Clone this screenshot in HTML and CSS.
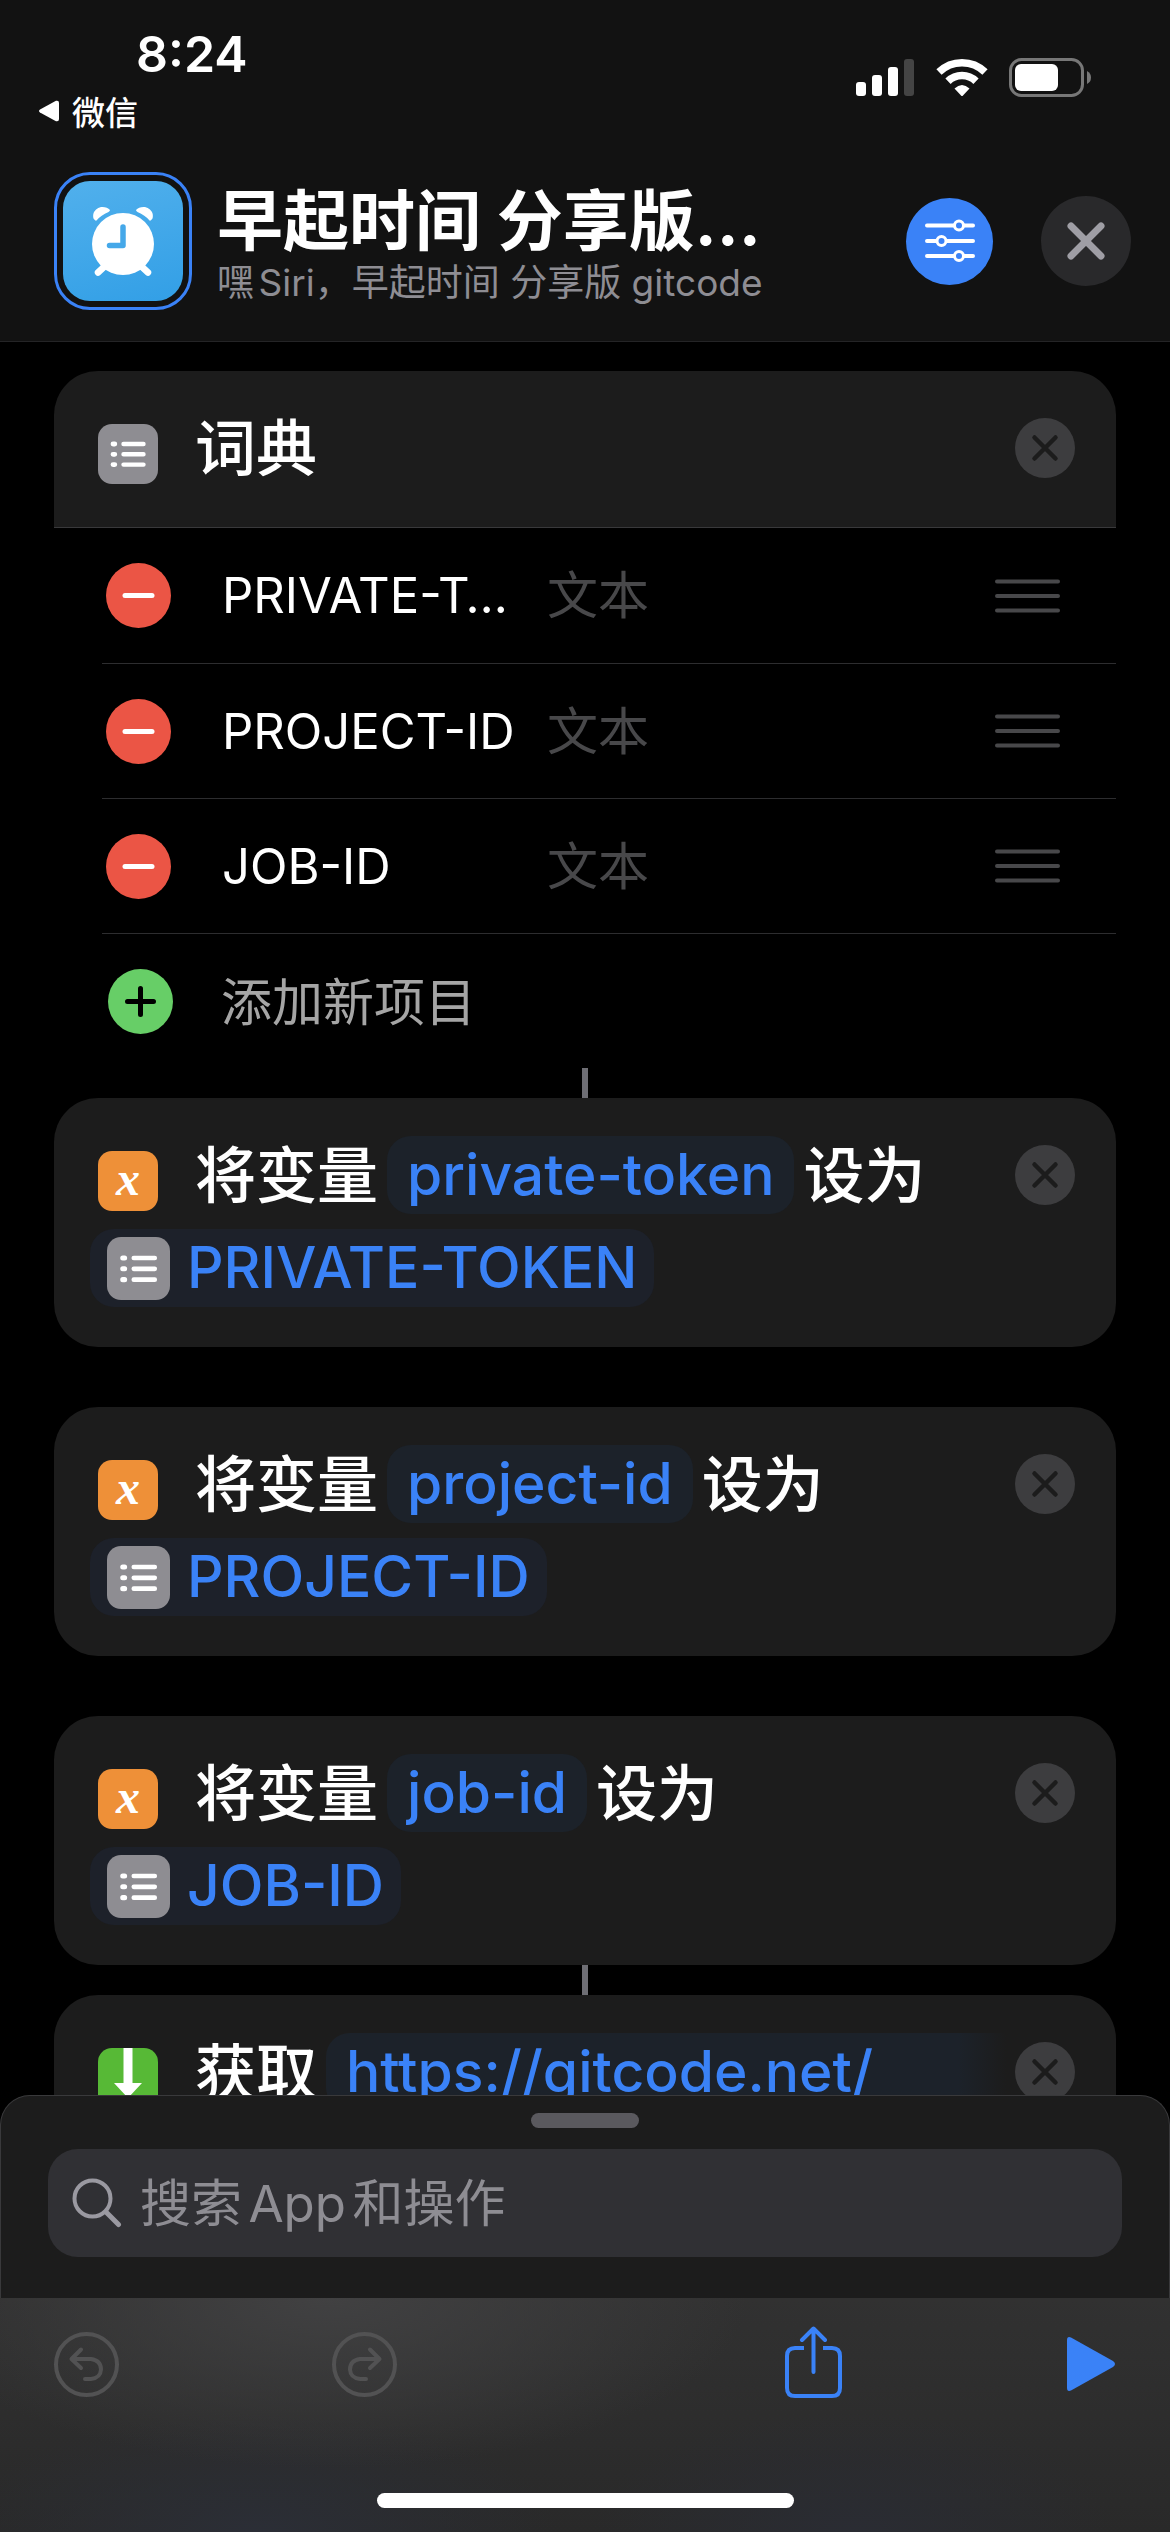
FILE: index.html
```html
<!DOCTYPE html>
<html lang="zh-CN">
<head>
<meta charset="utf-8">
<meta name="viewport" content="width=device-width, initial-scale=1">
<title>早起时间 分享版</title>
<link rel="stylesheet" href="styles.css">
</head>
<body>
<svg class="defs" aria-hidden="true">
  <symbol id="i-list" viewBox="0 0 60 60">
    <g fill="none" stroke="#fff" stroke-width="4.400" stroke-linecap="round">
      <path d="M25.500 20H45.500M25.500 30.300H45.500M25.500 40.600H45.500"/>
      <path stroke-width="4.800" d="M15 20h1.800M15 30.300h1.800M15 40.600h1.800"/>
    </g>
  </symbol>
  <symbol id="i-clear" viewBox="0 0 60 60">
    <circle cx="30" cy="30" r="30" fill="#3d3d3f"/>
    <path d="M19.500 19.500L40.500 40.500M40.500 19.500L19.500 40.500" fill="none" stroke="#1c1c1c" stroke-width="4.500" stroke-linecap="round"/>
  </symbol>
  <symbol id="i-minus" viewBox="0 0 65 65">
    <circle cx="32.500" cy="32.500" r="32.500" fill="#eb5545"/>
    <path d="M19 32.500H46" stroke="#fff" stroke-width="5" stroke-linecap="round"/>
  </symbol>
  <symbol id="i-grip" viewBox="0 0 65 34">
    <path d="M2 2.500H63M2 17H63M2 31.500H63" stroke="#48484a" stroke-width="4" stroke-linecap="round"/>
  </symbol>
</svg>

<div class="app">
  <header class="top">
    <div class="status">
      <div class="status-left">
        <time class="clock">8:24</time>
        <a class="back" href="#">
          <svg width="21" height="22" viewBox="0 0 21 22" aria-hidden="true"><path d="M2 9.500L18 .8Q21 0 21 3V19Q21 22 18 21.200L2 12.500Q0 11 2 9.500Z" fill="#fff"/></svg>
          <span>微信</span>
        </a>
      </div>
      <svg class="status-icons" width="236" height="40" viewBox="0 0 236 40" role="img" aria-label="信号、无线网络、电池">
        <g fill="#fff">
          <rect x="0" y="24" width="10" height="14" rx="3"/>
          <rect x="16" y="17" width="10" height="21" rx="3"/>
          <rect x="32" y="9" width="10" height="29" rx="3"/>
          <rect x="48" y="1" width="10" height="37" rx="3" fill="#444"/>
        </g>
        <g fill="none" stroke="#fff" stroke-width="7.500">
          <path d="M83 14A33 33 0 0 1 129 14"/>
          <path d="M92 23.200A20 20 0 0 1 120 23.200"/>
        </g>
        <path d="M98.500 30.500Q106 23.500 113.500 30.500L107 37.500Q106 38.500 105 37.500Z" fill="#fff"/>
        <rect x="154.500" y="1.500" width="72" height="36" rx="11" fill="none" stroke="#777" stroke-width="3"/>
        <rect x="159" y="6" width="43" height="27" rx="6" fill="#fff"/>
        <path d="M231 13Q235 15 235 19.500T231 26Z" fill="#777"/>
      </svg>
    </div>

    <div class="titlebar">
      <button class="app-icon" type="button" aria-label="图标">
        <svg width="120" height="120" viewBox="0 0 120 120" aria-hidden="true">
          <circle cx="60" cy="63" r="31" fill="#fff"/>
          <path d="M42 85L35 91.500M78 85L85 91.500" stroke="#fff" stroke-width="6.500" stroke-linecap="round"/>
          <path d="M32 39Q29.500 38 30.300 33Q32 27.500 38 26Q44 25.500 47 29Q47 30 45.500 31Q38 34 33.500 39.500Q32.500 40 32 39Z" fill="#fff"/>
          <path d="M88 39Q90.500 38 89.700 33Q88 27.500 82 26Q76 25.500 73 29Q73 30 74.500 31Q82 34 86.500 39.500Q87.500 40 88 39Z" fill="#fff"/>
          <path d="M60 46V64.500H46.500" fill="none" stroke="#45a8e9" stroke-width="5.500" stroke-linecap="round" stroke-linejoin="round"/>
        </svg>
      </button>
      <div class="titles">
        <h1>早起时间 分享版…</h1>
        <p>嘿Siri，早起时间 分享版 gitcode</p>
      </div>
      <button class="round settings" type="button" aria-label="设置">
        <svg width="50" height="44" viewBox="0 0 50 44" fill="#3a82f7" stroke="#fff" stroke-width="4" stroke-linecap="round" aria-hidden="true">
          <path d="M2 6.500H48M2 22H48M2 37H48"/>
          <circle cx="34" cy="6.500" r="4.500" stroke-width="3"/><circle cx="16.500" cy="22" r="4.500" stroke-width="3"/><circle cx="34" cy="37" r="4.500" stroke-width="3"/>
        </svg>
      </button>
      <button class="round close" type="button" aria-label="关闭">
        <svg width="38" height="38" viewBox="0 0 38 38" aria-hidden="true"><path d="M4 4L34 34M34 4L4 34" stroke="#9f9ea5" stroke-width="7" stroke-linecap="round"/></svg>
      </button>
    </div>
  </header>

  <main class="editor">
    <section class="card">
      <div class="card-body">
        <div class="line first">
          <span class="glyph gray"><svg aria-hidden="true"><use href="#i-list"/></svg></span>
          <h2 class="word">词典</h2>
          <button class="clear" type="button" aria-label="移除"><svg aria-hidden="true"><use href="#i-clear"/></svg></button>
        </div>
      </div>
      <ul class="dict">
        <li>
          <button class="dot" type="button" aria-label="删除"><svg aria-hidden="true"><use href="#i-minus"/></svg></button>
          <input class="key" type="text" aria-label="键" value="PRIVATE-T…">
          <input class="value" type="text" aria-label="值" placeholder="文本">
          <svg class="grip" aria-hidden="true"><use href="#i-grip"/></svg>
        </li>
        <li>
          <button class="dot" type="button" aria-label="删除"><svg aria-hidden="true"><use href="#i-minus"/></svg></button>
          <input class="key" type="text" aria-label="键" value="PROJECT-ID">
          <input class="value" type="text" aria-label="值" placeholder="文本">
          <svg class="grip" aria-hidden="true"><use href="#i-grip"/></svg>
        </li>
        <li>
          <button class="dot" type="button" aria-label="删除"><svg aria-hidden="true"><use href="#i-minus"/></svg></button>
          <input class="key" type="text" aria-label="键" value="JOB-ID">
          <input class="value" type="text" aria-label="值" placeholder="文本">
          <svg class="grip" aria-hidden="true"><use href="#i-grip"/></svg>
        </li>
        <li>
          <button class="add" type="button">
            <svg width="65" height="65" viewBox="0 0 65 65" aria-hidden="true"><circle cx="32.500" cy="32.500" r="32.500" fill="#67ce67"/><path d="M19.500 32.500H45.500M32.500 19.500V45.500" stroke="#000" stroke-width="5" stroke-linecap="round"/></svg>
            <span>添加新项目</span>
          </button>
        </li>
      </ul>
    </section>

    <div class="link-line"></div>

    <section class="card">
      <div class="card-body">
        <div class="line first">
          <span class="glyph orange">x</span>
          <span class="word">将变量</span><button class="chip" type="button">private-token</button><span class="word">设为</span>
          <button class="clear" type="button" aria-label="移除"><svg aria-hidden="true"><use href="#i-clear"/></svg></button>
        </div>
        <div class="line">
          <button class="chip variable" type="button"><span class="glyph gray"><svg aria-hidden="true"><use href="#i-list"/></svg></span>PRIVATE-TOKEN</button>
        </div>
      </div>
    </section>

    <section class="card apart">
      <div class="card-body">
        <div class="line first">
          <span class="glyph orange">x</span>
          <span class="word">将变量</span><button class="chip" type="button">project-id</button><span class="word">设为</span>
          <button class="clear" type="button" aria-label="移除"><svg aria-hidden="true"><use href="#i-clear"/></svg></button>
        </div>
        <div class="line">
          <button class="chip variable" type="button"><span class="glyph gray"><svg aria-hidden="true"><use href="#i-list"/></svg></span>PROJECT-ID</button>
        </div>
      </div>
    </section>

    <section class="card apart">
      <div class="card-body">
        <div class="line first">
          <span class="glyph orange">x</span>
          <span class="word">将变量</span><button class="chip" type="button">job-id</button><span class="word">设为</span>
          <button class="clear" type="button" aria-label="移除"><svg aria-hidden="true"><use href="#i-clear"/></svg></button>
        </div>
        <div class="line">
          <button class="chip variable" type="button"><span class="glyph gray"><svg aria-hidden="true"><use href="#i-list"/></svg></span>JOB-ID</button>
        </div>
      </div>
    </section>

    <div class="link-line"></div>

    <section class="card">
      <div class="card-body">
        <div class="line first">
          <span class="glyph green"><svg viewBox="0 0 60 60" aria-hidden="true"><path d="M25.500 0H34.500V35H44L30 50L16 35H25.500Z" fill="#fff"/></svg></span>
          <span class="word">获取</span><button class="chip url" type="button">https://gitcode.net/</button>
          <button class="clear" type="button" aria-label="移除"><svg aria-hidden="true"><use href="#i-clear"/></svg></button>
        </div>
      </div>
    </section>
  </main>

  <section class="sheet">
    <div class="grabber"></div>
    <label class="search">
      <svg width="50" height="50" viewBox="0 0 50 50" fill="none" stroke="#9a99a1" stroke-linecap="round" aria-hidden="true"><circle cx="20.500" cy="20.500" r="18" stroke-width="4"/><path d="M34 34L46.500 46.500" stroke-width="5"/></svg>
      <input type="search" aria-label="搜索" placeholder="搜索App和操作">
    </label>
  </section>

  <footer class="toolbar">
    <div class="tools">
      <button type="button" aria-label="撤销">
        <svg width="65" height="65" viewBox="0 0 65 65" fill="none" stroke="#525253" stroke-width="4" stroke-linecap="round" stroke-linejoin="round" aria-hidden="true"><circle cx="32.500" cy="32.500" r="30.500"/><path d="M27 17.500L17.500 27L27 36M18.500 27H37Q47 28.500 47 37.500Q46.500 46 37 47H31"/></svg>
      </button>
      <button type="button" aria-label="重做">
        <svg width="65" height="65" viewBox="0 0 65 65" fill="none" stroke="#525253" stroke-width="4" stroke-linecap="round" stroke-linejoin="round" aria-hidden="true"><circle cx="32.500" cy="32.500" r="30.500"/><path d="M38 17.500L47.500 27L38 36M46.500 27H28Q18 28.500 18 37.500Q18.500 46 28 47H34"/></svg>
      </button>
      <button class="share" type="button" aria-label="共享">
        <svg width="57" height="72" viewBox="0 0 57 72" fill="none" stroke="#3a82f7" stroke-width="4" stroke-linecap="round" stroke-linejoin="round" aria-hidden="true"><path stroke-linecap="butt" d="M19 22H10Q2 22 2 30V62Q2 70 10 70H47Q55 70 55 62V30Q55 22 47 22H38"/><path d="M28.500 46V3M17 14L28.500 2.500L40 14"/></svg>
      </button>
      <button type="button" aria-label="运行">
        <svg width="49" height="56" viewBox="0 0 49 56" aria-hidden="true"><path d="M0 4Q0 0 4 1.500L46 25Q50 28 46 31L4 54.500Q0 56 0 52Z" fill="#3a82f7"/></svg>
      </button>
    </div>
    <div class="home"></div>
  </footer>
</div>
</body>
</html>
```

FILE: styles.css
```css
:root {
  --blue: #3a82f7;
  --card: #1c1c1c;
  --muted: #8e8d93;
}

* { box-sizing: border-box; }

body, h1, h2, p, ul { margin: 0; padding: 0; }

body {
  background: #000;
  color: #fff;
  font-family: "Inter", "Noto Sans CJK SC", sans-serif;
}

button, input {
  margin: 0;
  padding: 0;
  border: 0;
  outline: 0;
  background: none;
  color: inherit;
  font: inherit;
}

button { flex: none; }
svg { display: block; flex: none; }
.defs { position: absolute; width: 0; height: 0; }

.app {
  display: flex;
  flex-direction: column;
  height: 100vh;
  overflow: hidden;
}

/* Header */
.top {
  flex: none;
  padding-bottom: 31px;
  border-bottom: 1px solid #242426;
  background: #121212;
}

.status {
  display: flex;
  justify-content: space-between;
  padding: 24px 78px 0 38px;
}

.clock {
  display: block;
  padding-left: 98px;
  font-size: 50px;
  font-weight: 600;
  line-height: 60px;
}

.back {
  display: flex;
  align-items: center;
  gap: 13px;
  height: 54px;
  color: #fff;
  font-size: 33px;
  font-weight: 500;
  text-decoration: none;
}

.status-icons { margin-top: 34px; }

.titlebar {
  display: flex;
  align-items: center;
  padding: 34px 39px 0 54px;
}

.app-icon {
  padding: 6px;
  border: 3px solid var(--blue);
  border-radius: 36px;
}

.app-icon svg {
  border-radius: 27px;
  background: linear-gradient(165deg, #51b0ec, #329fe6);
}

.titles {
  flex: 1;
  min-width: 0;
  margin-left: 25px;
  padding-top: 8px;
}

.titles h1 {
  font-size: 66px;
  font-weight: 700;
  line-height: 76px;
  white-space: nowrap;
}

.titles p {
  color: var(--muted);
  font-size: 37px;
  line-height: 48px;
  white-space: nowrap;
  text-autospace: normal;
}

.round {
  display: grid;
  place-items: center;
  border-radius: 50%;
}

.settings { width: 87px; height: 87px; background: var(--blue); }
.close { width: 90px; height: 90px; margin-left: 48px; background: #29292b; }

/* Action list */
.editor {
  flex: 1;
  min-height: 0;
  overflow: hidden;
  padding: 29px 54px 0;
}

.card {
  overflow: hidden;
  border-radius: 44px;
}

.apart { margin-top: 60px; }

.card-body {
  display: flex;
  flex-direction: column;
  gap: 15px;
  padding: 38px 41px 40px 36px;
  background: var(--card);
}

.line {
  display: flex;
  align-items: center;
  gap: 9px;
  height: 78px;
  white-space: nowrap;
}

.first { padding-left: 8px; }

.word {
  align-self: flex-start;
  font-size: 61px;
  font-weight: 500;
  line-height: 80px;
}

.glyph {
  flex: none;
  width: 60px;
  height: 60px;
  border-radius: 14px;
}

.glyph svg { width: 100%; height: 100%; }
.first .glyph { margin: 12px 28px 0 0; }
.gray { background: #8e8d92; }
.green { background: #57b936; }

.orange {
  background: #ee9038;
  font: italic 700 48px/56px "Liberation Serif", serif;
  text-align: center;
}

.chip {
  height: 78px;
  padding: 0 20px;
  border-radius: 24px;
  background: #1c222a;
  color: var(--blue);
  font-size: 57px;
  font-weight: 500;
  line-height: 78px;
}

.variable {
  display: flex;
  align-items: center;
  gap: 17px;
  padding: 0 17px;
  background: #1d212a;
}

.variable .glyph { width: 63px; height: 63px; }

.url {
  flex: 1;
  border-radius: 24px 0 0 24px;
  background: linear-gradient(to right, #1c222a 93%, #1c1c1c);
  text-align: left;
}

.clear { width: 60px; height: 60px; margin-left: auto; }
.clear svg, .dot svg { width: 100%; height: 100%; }

.dict {
  border-top: 1px solid #39393b;
  list-style: none;
  font-size: 51px;
}

.dict li {
  display: flex;
  align-items: center;
  height: 135px;
  margin-left: 48px;
  padding: 0 56px 0 4px;
}

.dict li + li { border-top: 1px solid #2d2d2f; }

.dot { width: 65px; height: 65px; }

.key {
  width: 296px;
  height: 72px;
  margin-left: 51px;
  font-size: 49px;
  text-overflow: ellipsis;
}

.value { flex: 1; min-width: 0; height: 72px; margin-left: 29px; }
.value::placeholder { color: #48484a; opacity: 1; }
.grip { width: 65px; height: 34px; }

.add {
  display: flex;
  align-items: center;
  gap: 48px;
  margin-left: 2px;
  color: #a5a5a5;
}

.add span { padding-bottom: 4px; }

.link-line {
  width: 6px;
  height: 30px;
  margin: 0 auto;
  background: #6e6e74;
}

/* Search sheet */
.sheet {
  flex: none;
  padding: 17px 47px 41px;
  border: 1px solid #39393b;
  border-bottom: 0;
  border-radius: 30px 30px 0 0;
  background: var(--card);
}

.grabber {
  width: 108px;
  height: 15px;
  margin: 0 auto 21px;
  border-radius: 8px;
  background: #5a595e;
}

.search {
  display: flex;
  align-items: center;
  gap: 18px;
  height: 108px;
  padding: 0 24px;
  border-radius: 30px;
  background: #303034;
}

.search input {
  flex: 1;
  min-width: 0;
  height: 72px;
  font-size: 51px;
  appearance: none;
  text-autospace: normal;
}

.search input::placeholder { color: var(--muted); opacity: 1; }

/* Bottom toolbar */
.toolbar {
  display: flex;
  flex: none;
  flex-direction: column;
  justify-content: space-between;
  height: 234px;
  padding: 28px 54px 24px;
  background:
    radial-gradient(ellipse 420px 170px at 28% 0, #414142, transparent),
    radial-gradient(ellipse 300px 120px at 22% 100%, #2b2e36, transparent),
    radial-gradient(ellipse 260px 120px at 73% 100%, #2a2c33, transparent),
    linear-gradient(#313131, #292929);
}

.tools {
  display: grid;
  grid-template-columns: 278fr 453fr 282fr 49px;
  align-items: center;
  justify-items: start;
  height: 76px;
}

.share { align-self: start; }

.home {
  width: 417px;
  height: 15px;
  margin: 0 auto;
  border-radius: 8px;
  background: #fff;
}
```
